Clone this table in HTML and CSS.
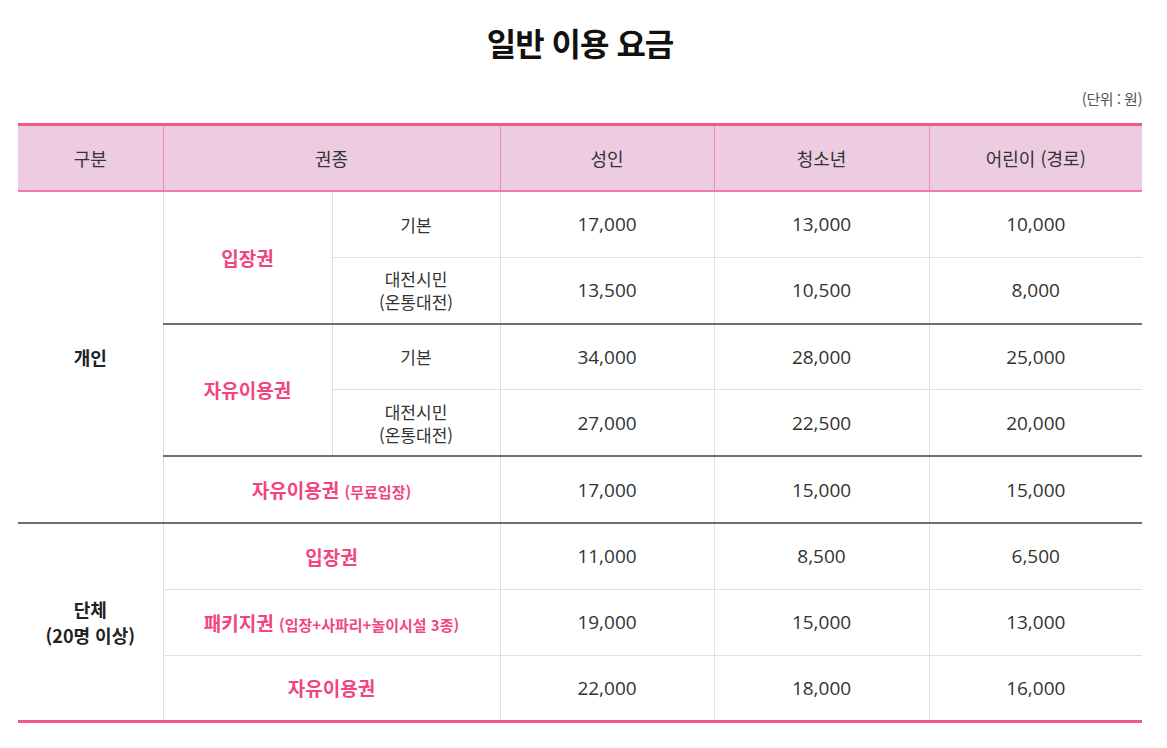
FILE: index.html
```html
<!DOCTYPE html>
<html lang="ko">
<head>
<meta charset="utf-8">
<title>일반 이용 요금</title>
<link rel="stylesheet" href="styles.css">
</head>
<body>
<div class="wrap">
  <h1 class="title">일반 이용 요금</h1>
  <p class="unit">(단위 : 원)</p>
  <table class="fee">
    <colgroup>
      <col class="c1"><col class="c2"><col class="c3"><col class="c4"><col class="c5"><col class="c6">
    </colgroup>
    <thead>
      <tr>
        <th>구분</th>
        <th colspan="2">권종</th>
        <th>성인</th>
        <th>청소년</th>
        <th>어린이 (경로)</th>
      </tr>
    </thead>
    <tbody>
      <tr>
        <td rowspan="5" class="cat">개인</td>
        <td rowspan="2" class="pink">입장권</td>
        <td class="kr">기본</td>
        <td class="num">17,000</td><td class="num">13,000</td><td class="num">10,000</td>
      </tr>
      <tr>
        <td class="kr two">대전시민<br>(온통대전)</td>
        <td class="num">13,500</td><td class="num">10,500</td><td class="num">8,000</td>
      </tr>
      <tr class="grp">
        <td rowspan="2" class="pink">자유이용권</td>
        <td class="kr">기본</td>
        <td class="num">34,000</td><td class="num">28,000</td><td class="num">25,000</td>
      </tr>
      <tr>
        <td class="kr two">대전시민<br>(온통대전)</td>
        <td class="num">27,000</td><td class="num">22,500</td><td class="num">20,000</td>
      </tr>
      <tr class="grp">
        <td colspan="2" class="pink">자유이용권 <small>(무료입장)</small></td>
        <td class="num">17,000</td><td class="num">15,000</td><td class="num">15,000</td>
      </tr>
      <tr class="grp">
        <td rowspan="3" class="cat">단체<br>(20명 이상)</td>
        <td colspan="2" class="pink">입장권</td>
        <td class="num">11,000</td><td class="num">8,500</td><td class="num">6,500</td>
      </tr>
      <tr>
        <td colspan="2" class="pink">패키지권 <small>(입장+사파리+놀이시설 3종)</small></td>
        <td class="num">19,000</td><td class="num">15,000</td><td class="num">13,000</td>
      </tr>
      <tr class="last">
        <td colspan="2" class="pink">자유이용권</td>
        <td class="num">22,000</td><td class="num">18,000</td><td class="num">16,000</td>
      </tr>
    </tbody>
  </table>
</div>
</body>
</html>
```

FILE: styles.css
```css
html, body {
  margin: 0;
  padding: 0;
  background: #ffffff;
}

body {
  font-family: "Noto Sans CJK KR", "Open Sans", sans-serif;
  color: #333333;
}

.wrap {
  width: 1124px;
  margin: 0 0 0 18px;
}

.title {
  margin: 0;
  padding-top: 21px;
  height: 42px;
  line-height: 42px;
  font-size: 32px;
  font-weight: 700;
  text-align: center;
  color: #111111;
  letter-spacing: -1px;
}

.unit {
  margin: 26px 0 0 0;
  height: 20px;
  line-height: 20px;
  font-size: 15px;
  text-align: right;
  color: #555555;
  letter-spacing: -0.5px;
}

.fee {
  margin-top: 14px;
  width: 1124px;
  border-collapse: collapse;
  table-layout: fixed;
}

.c1 { width: 145px; }
.c2 { width: 169px; }
.c3 { width: 168px; }
.c4 { width: 214px; }
.c5 { width: 215px; }
.c6 { width: 213px; }

.fee th {
  height: 64px;
  padding: 0;
  background: #edcbe0;
  font-size: 18px;
  font-weight: 400;
  color: #333333;
  border-top: 3px solid #f2588c;
  border-bottom: 2px solid #f27aa6;
  border-left: 1px solid #f08ab2;
  border-right: 1px solid #f08ab2;
}

.fee th:first-child { border-left: none; }
.fee th:last-child { border-right: none; }

.fee td {
  height: 64.8px;
  padding: 0;
  text-align: center;
  vertical-align: middle;
  border: 1px solid #e0e0e0;
  font-size: 17px;
}

.fee tr td:last-child { border-right: none; }
.fee td.cat { border-left: none; }

.fee tr.grp td { border-top: 2px solid #707070; }
.fee tr.last td { border-bottom: 3px solid #f2588c; }
.fee td.cat[rowspan="3"] { border-bottom: 3px solid #f2588c; }

.cat {
  font-weight: 700;
  color: #222222;
  font-size: 18px !important;
  line-height: 26px;
}

.kr {
  color: #333333;
}

.two { line-height: 23px; }

.num {
  font-family: "Open Sans", "Noto Sans CJK KR", sans-serif;
  font-size: 19px !important;
  color: #333333;
}

.pink {
  color: #f2457f;
  font-weight: 700;
  font-size: 19px !important;
}

.pink small {
  font-size: 15px;
  font-weight: 700;
}
```
